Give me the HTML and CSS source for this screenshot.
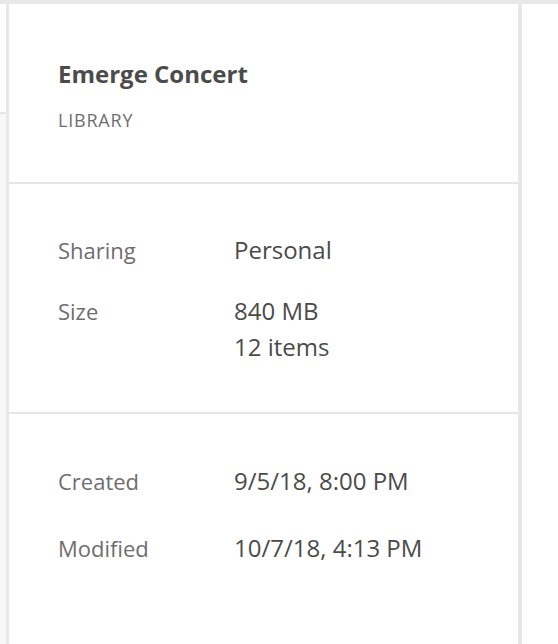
FILE: index.html
```html
<!DOCTYPE html>
<html lang="en">
<head>
<meta charset="utf-8">
<title>Emerge Concert</title>
<link rel="stylesheet" href="styles.css">
</head>
<body>
<div class="topbar"></div>
<div class="layout">
  <div class="side-left">
    <div class="side-top"></div>
    <div class="side-rest"></div>
  </div>
  <aside class="panel">
    <header class="panel-header">
      <h1 class="title">Emerge Concert</h1>
      <div class="kind">LIBRARY</div>
    </header>
    <section class="section section-info">
      <div class="row">
        <div class="label">Sharing</div>
        <div class="value">Personal</div>
      </div>
      <div class="row row-size">
        <div class="label">Size</div>
        <div class="value">840 MB<br>12 items</div>
      </div>
    </section>
    <section class="section section-dates">
      <div class="row">
        <div class="label">Created</div>
        <div class="value">9/5/18, 8:00 PM</div>
      </div>
      <div class="row row-modified">
        <div class="label">Modified</div>
        <div class="value">10/7/18, 4:13 PM</div>
      </div>
    </section>
  </aside>
  <div class="side-right"></div>
</div>
</body>
</html>
```
FILE: styles.css
```css
html, body {
  margin: 0;
  padding: 0;
  background: #ffffff;
  height: 100%;
}
body {
  font-family: "Open Sans", "Noto Sans", sans-serif;
  display: flex;
  flex-direction: column;
}
.topbar {
  height: 4px;
  background: #e8e8e8;
  flex: none;
}
.layout {
  flex: 1;
  display: flex;
}
.side-left {
  width: 6px;
  display: flex;
  flex-direction: column;
}
.side-top {
  height: 108px;
  background: #ffffff;
  border-bottom: 2px solid #e6e6e6;
}
.side-rest {
  flex: 1;
  background: #f8f8f8;
}
.panel {
  width: 509px;
  border-left: 3px solid #e8e8e8;
  border-right: 4px solid #e8e8e8;
  background: #ffffff;
}
.side-right {
  flex: 1;
  background: #ffffff;
}
.panel-header {
  padding: 55px 0 0 49px;
  height: 123px;
  border-bottom: 2px solid #e6e6e6;
}
.title {
  margin: 0;
  font-size: 24px;
  line-height: 30px;
  font-weight: 700;
  color: #4b4b4b;
}
.kind {
  margin-top: 21px;
  font-size: 18px;
  line-height: 20px;
  letter-spacing: 0.8px;
  color: #6e6e6e;
}
.section {
  padding-left: 49px;
}
.section-info {
  padding-top: 48px;
  height: 180px;
  border-bottom: 2px solid #e6e6e6;
}
.section-dates {
  padding-top: 49px;
}
.row {
  display: grid;
  grid-template-columns: 176px 1fr;
  align-items: baseline;
  line-height: 36px;
}
.row-size {
  margin-top: 25px;
}
.row-modified {
  margin-top: 31px;
}
.label {
  font-size: 22px;
  color: #6e6e6e;
}
.value {
  font-size: 24px;
  color: #4b4b4b;
}
```
